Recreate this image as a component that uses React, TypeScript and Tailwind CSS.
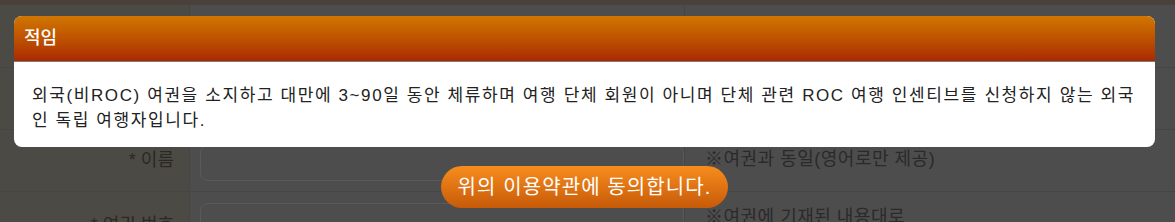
export default function App() {
  return (
    <div className="relative w-[1175px] h-[222px] overflow-hidden bg-[#4d4d4d] font-['Liberation_Sans','Noto_Sans_CJK_KR',sans-serif]">
      <div className="h-[5px] bg-[#4a423a]" />
      <div className="grid grid-cols-[190px_495px_1fr]">
        <div className="h-[63px] bg-[#4b4a45] border-r border-b border-[#454541]" />
        <div className="h-[63px] border-r border-b border-[#454545]" />
        <div className="h-[63px] border-b border-[#454545]" />

        <div className="h-[62px] bg-[#4b4a45] border-r border-b border-[#454541]" />
        <div className="h-[62px] border-r border-b border-[#454545]" />
        <div className="h-[62px] border-b border-[#454545]" />

        <div className="h-[62px] bg-[#4b4a45] border-r border-b border-[#454541] flex items-center justify-end pr-[15px] text-[18px] text-[#2b2822]">
          * 이름
        </div>
        <div className="h-[62px] border-r border-b border-[#454545] pl-[10px] pt-[15px]">
          <div className="h-[36px] rounded-[8px] border border-[#5a5a5a]" />
        </div>
        <div className="h-[62px] border-b border-[#454545] pl-[20px] pt-[16px] text-[18px] tracking-[0.5px] text-[#2a2a2a] whitespace-nowrap">
          ※여권과 동일(영어로만 제공)
        </div>

        <div className="h-[62px] bg-[#4b4a45] border-r border-[#454541] flex items-start justify-end pt-[20px] pr-[15px] text-[18px] text-[#2b2822] whitespace-nowrap">
          * 여권 번호
        </div>
        <div className="h-[62px] border-r border-[#454545] pl-[10px] pt-[11px]">
          <div className="h-[36px] rounded-[8px] border border-[#5a5a5a]" />
        </div>
        <div className="h-[62px] pl-[20px] pt-[12px] text-[18px] tracking-[0.5px] text-[#2a2a2a] whitespace-nowrap">
          ※여권에 기재된 내용대로
        </div>
      </div>

      <div className="absolute left-[14px] top-[16px] w-[1141px] rounded-[8px] overflow-hidden bg-white">
        <div className="h-[46px] bg-gradient-to-b from-[#d07600] to-[#aa2800] border-b border-[#7a7a7a] flex items-center pl-[10px] text-[18px] font-medium text-white">
          적임
        </div>
        <div className="pl-[18px] pr-[16px] pt-[21px] pb-[14px] text-[17px] tracking-[1.6px] leading-[25px] text-[#222]">
          외국(비ROC) 여권을 소지하고 대만에 3~90일 동안 체류하며 여행 단체 회원이 아니며 단체 관련 ROC 여행 인센티브를 신청하지 않는 외국인 독립 여행자입니다.
        </div>
      </div>

      <div className="absolute left-[441px] top-[166px] w-[287px] h-[42px] rounded-full bg-gradient-to-b from-[#f78d1d] to-[#c75a08] flex items-center justify-center text-[20px] tracking-[1.1px] text-white whitespace-nowrap">
        위의 이용약관에 동의합니다.
      </div>
    </div>
  );
}
